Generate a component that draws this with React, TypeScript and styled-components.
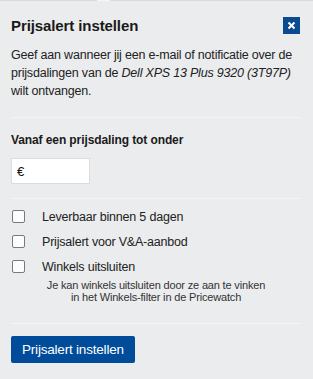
import React, { useState } from 'react'
import styled, { createGlobalStyle } from 'styled-components'

const GlobalStyle = createGlobalStyle`
  html, body {
    margin: 0;
    padding: 0;
    background: #ebecee;
  }
  body {
    font-family: "Liberation Sans", Arial, sans-serif;
    color: #222;
  }
`

const Panel = styled.div`
  position: relative;
  width: 313px;
  height: 379px;
  box-sizing: border-box;
  border-top: 1px solid #d9dadd;
  background: #ebecee;
  padding: 14px 12px 0 11px;
`

const Notch = styled.div`
  position: absolute;
  top: -1px;
  left: 97px;
  width: 13px;
  height: 1px;
  background: #f6f6f7;
`

const Header = styled.div`
  display: flex;
  align-items: center;
  justify-content: space-between;
  height: 20px;
`

const Title = styled.h2`
  margin: 0;
  font-size: 15px;
  font-weight: bold;
  letter-spacing: -0.1px;
  color: #1a1a1a;
`

const CloseButton = styled.button`
  width: 17px;
  height: 17px;
  padding: 0;
  border: 0;
  background: #0a4a91;
  display: flex;
  align-items: center;
  justify-content: center;
  cursor: pointer;
  margin-right: 1px;
`

const Intro = styled.p`
  margin: 11px 0 0;
  font-size: 12.5px;
  letter-spacing: -0.2px;
  line-height: 18px;
  color: #222;
  em {
    font-style: italic;
  }
`

const Divider = styled.hr`
  margin: 0;
  border: 0;
  border-top: 1px solid #f3f4f5;
`

const Section = styled.div<{ $pad: string }>`
  padding: ${p => p.$pad};
`

const Label = styled.div`
  font-size: 12px;
  font-weight: bold;
  letter-spacing: -0.1px;
  line-height: 16px;
  color: #1a1a1a;
`

const PriceBox = styled.label`
  display: flex;
  align-items: center;
  width: 79px;
  height: 26px;
  box-sizing: border-box;
  margin-top: 10px;
  background: #fff;
  border: 1px solid #dcdcdc;
  padding-left: 5px;
  font-size: 13px;
  color: #111;
`

const PriceInput = styled.input`
  width: 50px;
  border: 0;
  outline: none;
  background: transparent;
  font: inherit;
  padding: 0 0 0 3px;
`

const CheckRow = styled.label`
  display: flex;
  align-items: center;
  height: 25px;
  font-size: 12.5px;
  letter-spacing: -0.2px;
  color: #222;
  cursor: pointer;
`

const Box = styled.span<{ $on: boolean }>`
  width: 11px;
  height: 11px;
  border: 1px solid #7a7a7a;
  border-radius: 2px;
  background: ${p => (p.$on ? '#0a4a91' : '#fdfdfd')};
  margin: 0 17px 0 1px;
  flex: none;
`

const Note = styled.div`
  text-align: center;
  font-size: 11px;
  letter-spacing: -0.17px;
  line-height: 12px;
  color: #333;
`

const Submit = styled.button`
  margin-top: 12px;
  height: 27px;
  padding: 0 11px;
  border: 0;
  border-radius: 2px;
  background: #004c9a;
  color: #fff;
  font-family: "Liberation Sans", Arial, sans-serif;
  font-size: 13.5px;
  letter-spacing: -0.2px;
  cursor: pointer;
`

const options = ['Leverbaar binnen 5 dagen', 'Prijsalert voor V&A-aanbod', 'Winkels uitsluiten']

const App = () => {
  const [checked, setChecked] = useState<boolean[]>([false, false, false])
  const [price, setPrice] = useState<string>('')

  const toggle = (i: number) => {
    setChecked(checked.map((c, j) => (j === i ? !c : c)))
  }

  return (
    <Panel>
      <GlobalStyle />
      <Notch />
      <Header>
        <Title>Prijsalert instellen</Title>
        <CloseButton aria-label="Sluiten">
          <svg width="9" height="9" viewBox="0 0 9 9">
            <path d="M1.5 1.5 L7.5 7.5 M7.5 1.5 L1.5 7.5" stroke="#fff" strokeWidth="2" />
          </svg>
        </CloseButton>
      </Header>
      <Intro>
        Geef aan wanneer jij een e-mail of notificatie over de prijsdalingen van de{' '}
        <em>Dell XPS 13 Plus 9320 (3T97P)</em> wilt ontvangen.
      </Intro>
      <Section $pad="17px 0 0">
        <Divider />
      </Section>
      <Section $pad="14px 0 14px">
        <Label>Vanaf een prijsdaling tot onder</Label>
        <PriceBox>
          €<PriceInput value={price} onChange={e => setPrice(e.target.value)} />
        </PriceBox>
      </Section>
      <Divider />
      <Section $pad="5px 0 0">
        {options.map((o, i) => (
          <CheckRow key={o} onClick={() => toggle(i)}>
            <Box $on={checked[i]} />
            {o}
          </CheckRow>
        ))}
        <Note>
          Je kan winkels uitsluiten door ze aan te vinken
          <br />
          in het Winkels-filter in de Pricewatch
        </Note>
      </Section>
      <Section $pad="20px 0 0">
        <Divider />
        <Submit>Prijsalert instellen</Submit>
      </Section>
    </Panel>
  )
}

export default App
